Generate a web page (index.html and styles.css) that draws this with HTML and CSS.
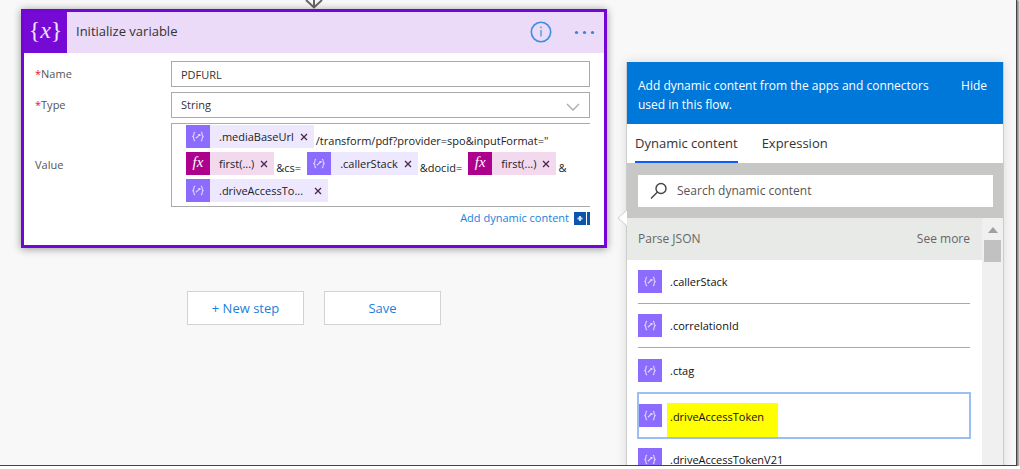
FILE: index.html
```html
<!DOCTYPE html>
<html lang="en">
<head>
<meta charset="utf-8">
<title>Flow designer</title>
<link rel="stylesheet" href="styles.css">
</head>
<body>
<svg class="symbols" aria-hidden="true">
  <symbol id="json" viewBox="0 0 24 24">
    <path d="M9 7.500C7 7.500 8 10 7.400 11L6.500 12L7.400 13C8 14 7 16.500 9 16.500M15 7.500C17 7.500 16 10 16.600 11L17.500 12L16.600 13C16 14 17 16.500 15 16.500M9.800 13.800L14 10M12.300 10H14V11.500" fill="none" stroke="#dfd5ff" stroke-width="1.200"/>
  </symbol>
</svg>
<div class="window">
  <main class="designer">
    <svg class="arrow" viewBox="0 0 20 9" aria-hidden="true"><path d="M10 0V8M2 0L10 7.500L18 0" fill="none" stroke="#666" stroke-width="2"/></svg>
    <section class="card">
      <header class="card-header">
        <span class="card-icon">{<i>x</i>}</span>
        <h1 class="card-title">Initialize variable</h1>
        <button class="icon-button" aria-label="Information">
          <svg width="22" height="22" viewBox="0 0 22 22"><circle cx="11" cy="11" r="9.700" fill="none" stroke="#3a8ee0" stroke-width="1.600"/><path d="M11 9V15.500M11 5.500V7.200" stroke="#5a9fe6" stroke-width="1.500"/></svg>
        </button>
        <button class="icon-button" aria-label="More options">
          <svg width="22" height="22" viewBox="0 0 22 22"><g fill="#2f86dc"><circle cx="2.500" cy="11.500" r="1.600"/><circle cx="10.500" cy="11.500" r="1.600"/><circle cx="18.500" cy="11.500" r="1.600"/></g></svg>
        </button>
      </header>
      <div class="card-body">
        <div class="field">
          <label class="label" for="name"><span class="required">*</span>Name</label>
          <input class="control" id="name" type="text" value="PDFURL">
        </div>
        <div class="field">
          <label class="label" for="type"><span class="required">*</span>Type</label>
          <span class="select-wrap">
            <select class="control" id="type"><option>String</option></select>
            <svg class="chevron" viewBox="0 0 14 8" aria-hidden="true"><path d="M1 1L7 7L13 1" fill="none" stroke="#aaa" stroke-width="1.300"/></svg>
          </span>
        </div>
        <div class="field">
          <span class="label" id="value-label">Value</span>
          <div class="editor" role="textbox" aria-labelledby="value-label">
            <div class="line">
              <span class="token"><svg class="badge"><use href="#json"/></svg><span class="token-text">.mediaBaseUrl</span><button class="remove" aria-label="Remove .mediaBaseUrl"><svg viewBox="0 0 8 8"><path d="M1 1L7 7M7 1L1 7"/></svg></button></span>
              <span class="plain">/transform/pdf?provider=spo&amp;inputFormat="</span>
            </div>
            <div class="line">
              <span class="token fx"><span class="badge">fx</span><span class="token-text">first(...)</span><button class="remove" aria-label="Remove first"><svg viewBox="0 0 8 8"><path d="M1 1L7 7M7 1L1 7"/></svg></button></span>
              <span class="plain spaced">&amp;cs=</span>
              <span class="token"><svg class="badge"><use href="#json"/></svg><span class="token-text">.callerStack</span><button class="remove" aria-label="Remove .callerStack"><svg viewBox="0 0 8 8"><path d="M1 1L7 7M7 1L1 7"/></svg></button></span>
              <span class="plain spaced">&amp;docid=</span>
              <span class="token fx"><span class="badge">fx</span><span class="token-text">first(...)</span><button class="remove" aria-label="Remove first"><svg viewBox="0 0 8 8"><path d="M1 1L7 7M7 1L1 7"/></svg></button></span>
              <span class="plain">&amp;</span>
            </div>
            <div class="line">
              <span class="token"><svg class="badge"><use href="#json"/></svg><span class="token-text wide">.driveAccessTo...</span><button class="remove" aria-label="Remove .driveAccessToken"><svg viewBox="0 0 8 8"><path d="M1 1L7 7M7 1L1 7"/></svg></button></span>
            </div>
          </div>
        </div>
        <button class="add-content">Add dynamic content
          <svg width="16" height="13" viewBox="0 0 16 13" aria-hidden="true"><path d="M0 0H12V13H0ZM13 0H16V13H13Z" fill="#0b55ae"/><path d="M6 4V9M3.500 6.500H8.500" stroke="#cfe4fa" stroke-width="2"/></svg>
        </button>
      </div>
    </section>
    <div class="actions">
      <button class="action">+ New step</button>
      <button class="action">Save</button>
    </div>
  </main>
  <aside class="panel">
    <svg class="callout" viewBox="0 0 10 18" aria-hidden="true"><path d="M10 1L1 9L10 17" fill="#fff" stroke="#ccc"/></svg>
    <header class="panel-header">
      <p class="panel-note">Add dynamic content from the apps and connectors used in this flow.</p>
      <button class="hide">Hide</button>
    </header>
    <nav class="tabs" role="tablist">
      <button class="tab active" role="tab" aria-selected="true">Dynamic content</button>
      <button class="tab" role="tab" aria-selected="false">Expression</button>
    </nav>
    <div class="search-band">
      <label class="search">
        <svg width="18" height="18" viewBox="0 0 18 18" aria-hidden="true"><circle cx="11" cy="6.500" r="5" fill="none" stroke="#444" stroke-width="1.400"/><path d="M7.500 10L1 16.500" stroke="#444" stroke-width="1.500"/></svg>
        <input class="search-input" type="text" placeholder="Search dynamic content" aria-label="Search dynamic content">
      </label>
    </div>
    <div class="results">
      <div class="list">
        <div class="group"><h2 class="group-title">Parse JSON</h2><button class="more">See more</button></div>
        <button class="item"><svg class="badge"><use href="#json"/></svg><span class="item-text">.callerStack</span></button>
        <button class="item"><svg class="badge"><use href="#json"/></svg><span class="item-text">.correlationId</span></button>
        <button class="item last"><svg class="badge"><use href="#json"/></svg><span class="item-text">.ctag</span></button>
        <button class="item focused"><svg class="badge"><use href="#json"/></svg><span class="item-text marked">.driveAccessToken</span></button>
        <button class="item"><svg class="badge"><use href="#json"/></svg><span class="item-text">.driveAccessTokenV21</span></button>
      </div>
      <div class="scrollbar" aria-hidden="true">
        <svg width="10" height="6" viewBox="0 0 10 6"><path d="M5 0L10 6H0Z" fill="#a0a0a0"/></svg>
        <span class="thumb"></span>
      </div>
    </div>
  </aside>
</div>
</body>
</html>
```
FILE: styles.css
```css
* { box-sizing: border-box; }
body {
  margin: 0;
  background: #fff;
  color: #333;
  font: 12px/18px "Open Sans", "Noto Sans", sans-serif;
}
h1, h2, p { margin: 0; font-weight: 400; }
button, input, select { font: inherit; color: inherit; }
button { padding: 0; border: 0; background: none; cursor: pointer; }
.symbols { position: absolute; width: 0; height: 0; }

.window {
  display: flex;
  align-items: flex-start;
  gap: 19px;
  height: calc(100vh - 3px);
  margin-right: 3px;
  padding: 0 12px 0 21px;
  overflow: hidden;
  background: #f8f8f8;
  border-right: 1px solid #444;
  border-bottom: 1px solid #444;
  box-shadow: 1px 1px 2px 1px #888;
}
.designer { flex: 1; min-width: 0; display: flex; flex-direction: column; align-items: center; }
.arrow { width: 20px; height: 9px; }

.card {
  width: 100%;
  background: #fff;
  border: 3px solid #7106d6;
  box-shadow: 0 1px 8px rgba(0, 0, 0, .4);
}
.card-header { display: flex; align-items: center; height: 41px; padding-right: 8px; background: #ebdaf8; }
.card-icon {
  width: 43px;
  height: 41px;
  margin-right: 9px;
  background: #7709d4;
  color: #f0e2ff;
  font: 24px/36px "Liberation Serif", serif;
  text-align: center;
}
.card-title { flex: 1; padding-bottom: 3px; font-size: 13px; }
.icon-button { display: flex; margin-left: 22px; padding-bottom: 1px; }
.card-body { display: flex; flex-direction: column; gap: 5px; padding: 8px 14px 18px 11px; }
.field { display: grid; grid-template-columns: 136px minmax(0, 1fr); align-items: center; }
.label { font-size: 11px; color: #555; }
.required { color: #e81123; }
.control {
  width: 100%;
  height: 26px;
  padding: 0 9px;
  border: 1px solid #aaa;
  border-radius: 0;
  background: #fff;
  font-size: 11px;
  appearance: none;
}
.select-wrap { position: relative; display: flex; }
.chevron { position: absolute; right: 10px; top: 11px; width: 14px; height: 8px; pointer-events: none; }

.editor {
  display: flex;
  flex-direction: column;
  gap: 4px;
  padding: 1px 0 4px 14px;
  border: 1px solid #aaa;
  border-right: 0;
  color: #222;
  font-size: 11px;
}
.line { display: flex; height: 23px; white-space: nowrap; }
.token { display: flex; align-items: center; background: #eee8ff; }
.badge { flex: none; width: 24px; height: 23px; background: #8c6cff; }
.fx { background: #f3d9ee; }
.fx .badge { background: #ad008c; color: #fff; font: italic 15px/21px "Liberation Serif", serif; text-align: center; }
.token-text { padding: 0 6px 0 9px; }
.wide { padding-right: 11px; }
.remove { display: flex; padding-right: 6px; }
.remove svg { width: 8px; height: 8px; fill: none; stroke: #4a2550; stroke-width: 1.3; }
.plain { padding: 7px 0 0 2px; }
.spaced { padding-right: 6px; }
.add-content { display: flex; align-items: center; align-self: flex-end; gap: 5px; margin-top: -3px; color: #1a7fdc; font-size: 11px; }

.actions { display: flex; gap: 20px; margin-top: 43px; }
.action { width: 117px; height: 34px; border: 1px solid #d2d2d2; background: #fff; color: #1a7fdc; font-size: 13px; }

.panel {
  position: relative;
  flex: none;
  width: 378px;
  margin-top: 62px;
  background: #fff;
  border-left: 1px solid #ccc;
  border-right: 1px solid #ccc;
  box-shadow: 0 0 10px rgba(0, 0, 0, .12);
}
.callout { position: absolute; left: -10px; top: 147px; width: 10px; height: 18px; }
.panel-header { display: flex; align-items: flex-start; justify-content: space-between; gap: 12px; padding: 14px 16px 10px 11px; background: #0078d9; color: #fff; }
.panel-note { line-height: 19px; max-width: 304px; }
.hide { line-height: 20px; }
.tabs { display: flex; gap: 24px; height: 39px; padding-left: 8px; }
.tab { font-size: 13px; border-bottom: 2px solid transparent; }
.active { border-color: #0a5cff; }
.search-band { padding: 12px 10px 11px 11px; background: #c7c8c6; }
.search { display: flex; align-items: center; gap: 9px; height: 32px; padding-left: 12px; background: #fff; }
.search-input { flex: 1; min-width: 0; padding: 0; border: 0; outline: 0; background: none; }
.search-input::placeholder { color: #555; opacity: 1; }
.results { display: flex; }
.list { flex: 1; display: flex; flex-direction: column; }
.group { display: flex; align-items: center; justify-content: space-between; height: 42px; padding: 0 12px 0 11px; background: #e8eae7; color: #666; }
.group-title { font-size: 12px; }
.item { display: flex; align-items: center; height: 44px; margin: 0 12px 0 11px; border-bottom: 1px solid #aaa; color: #111; font-size: 11px; }
.item-text { padding-left: 8px; }
.last { height: 45px; border-bottom: 0; }
.focused { height: 45px; border: 0; outline: 2px solid #9dbef2; outline-offset: -1px; }
.marked { align-self: flex-end; height: 35px; margin-left: 5px; padding: 0 14px 0 3px; background: #ff0; line-height: 27px; }
.scrollbar { display: flex; flex-direction: column; align-items: center; gap: 7px; width: 21px; padding-top: 9px; background: #f0f0f0; }
.thumb { width: 17px; height: 22px; background: #c1c1c1; }
```
